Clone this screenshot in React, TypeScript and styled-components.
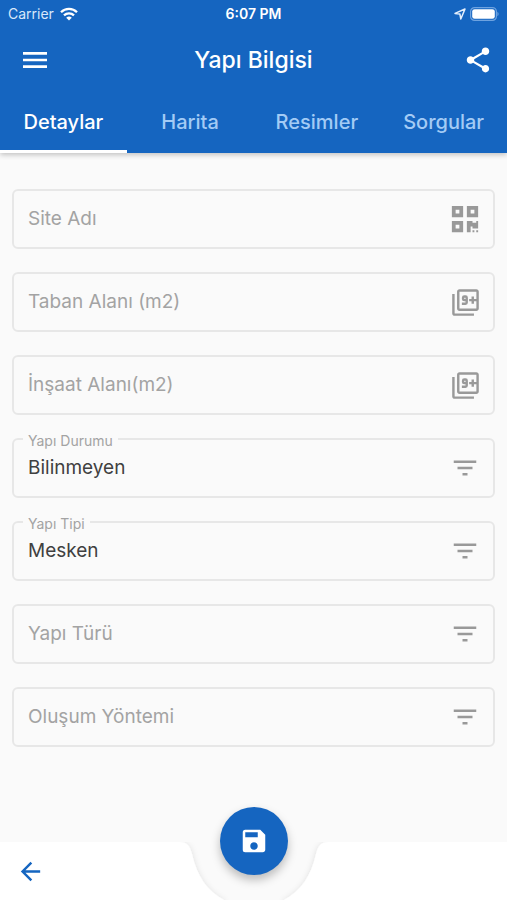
import { useId, useState } from "react";
import type { ReactNode } from "react";
import styled, { createGlobalStyle } from "styled-components";
import { FaQrcode } from "react-icons/fa";
import {
  MdArrowBack,
  MdFilterList,
  MdMenu,
  MdOutlineFilter9Plus,
  MdSave,
  MdShare,
} from "react-icons/md";

const colors = {
  primary: "#1565c0",
  page: "#fafafa",
  outline: "#e7e7e7",
  hint: "#a3a3a3",
  icon: "#999999",
  text: "#404040",
  inactiveTab: "#a3cbf5",
};

const GlobalStyle = createGlobalStyle`
  *, *::before, *::after { box-sizing: border-box; }
  body {
    margin: 0;
    background: ${colors.page};
    font-family: Inter, "Liberation Sans", sans-serif;
    color: ${colors.text};
  }
  button, input, select { font: inherit; }
`;

const Page = styled.div`
  display: flex;
  flex-direction: column;
  min-height: 100vh;
`;

const Header = styled.header`
  position: relative;
  background: ${colors.primary};
  color: #fff;
  box-shadow: 0 2px 5px rgba(0, 0, 0, 0.22);
`;

const StatusBar = styled.div`
  display: grid;
  grid-template-columns: 1fr auto 1fr;
  align-items: center;
  height: 28px;
  padding: 0 8px;
  font-size: 14px;
  line-height: 16px;
`;

const StatusGroup = styled.div<{ $end?: boolean }>`
  display: flex;
  align-items: center;
  gap: ${(p) => (p.$end ? 4 : 6)}px;
  justify-content: ${(p) => (p.$end ? "flex-end" : "flex-start")};
  color: #d9e8fa;
`;

const Clock = styled.span`
  font-weight: 600;
`;

const TitleBar = styled.div`
  display: grid;
  grid-template-columns: 1fr auto 1fr;
  align-items: center;
  height: 64px;
  padding: 0 14px;
`;

const Title = styled.h1`
  margin: 0;
  font-size: 23px;
  line-height: 28px;
  font-weight: 500;
`;

const IconButton = styled.button<{ $end?: boolean; $tone?: string }>`
  display: flex;
  justify-self: ${(p) => (p.$end ? "end" : "start")};
  padding: 0 ${(p) => (p.$end ? 0 : 5)}px;
  border: 0;
  background: none;
  color: ${(p) => p.$tone ?? "#fff"};
  cursor: pointer;
`;

const Tabs = styled.div`
  display: grid;
  grid-template-columns: repeat(4, 1fr);
`;

const Tab = styled.button<{ $active: boolean }>`
  height: 61px;
  padding: 2px 0 0;
  border: 0;
  border-bottom: 3px solid ${(p) => (p.$active ? "#fff" : "transparent")};
  background: none;
  color: ${(p) => (p.$active ? "#fff" : colors.inactiveTab)};
  font-size: 20px;
  line-height: 24px;
  font-weight: 500;
  cursor: pointer;
`;

const Form = styled.form`
  flex: 1;
  display: flex;
  flex-direction: column;
  gap: 23px;
  padding: 36px 12px 32px;
`;

const FieldBox = styled.div`
  position: relative;
  display: flex;
  align-items: center;
  height: 60px;
  padding-right: 13px;
  border: 2px solid ${colors.outline};
  border-radius: 6px;
  color: ${colors.icon};

  svg {
    flex: none;
    pointer-events: none;
  }
`;

const FieldLabel = styled.label<{ $floating: boolean }>`
  position: absolute;
  left: ${(p) => (p.$floating ? 9 : 14)}px;
  top: ${(p) => (p.$floating ? -7 : 16)}px;
  padding: 0 ${(p) => (p.$floating ? 5 : 0)}px;
  background: ${colors.page};
  color: ${colors.hint};
  font-size: ${(p) => (p.$floating ? 14 : 19)}px;
  line-height: ${(p) => (p.$floating ? 16 : 24)}px;
  pointer-events: none;
`;

const TextInput = styled.input`
  flex: 1;
  min-width: 0;
  align-self: stretch;
  padding: 0 14px;
  border: 0;
  outline: 0;
  background: none;
  color: ${colors.text};
  font-size: 19px;
`;

const Select = styled.select`
  flex: 1;
  min-width: 0;
  align-self: stretch;
  padding: 0 14px 2px;
  border: 0;
  outline: 0;
  appearance: none;
  background: none;
  color: ${colors.text};
  font-size: 19px;
`;

const BottomBar = styled.footer`
  position: sticky;
  bottom: 0;
  display: flex;
  height: 58px;
`;

const BarSide = styled.div`
  flex: 1;
  display: flex;
  align-items: center;
  padding-left: 11px;
  background: #fff;
`;

const Notch = styled.div`
  position: relative;
  width: 148px;

  > svg {
    display: block;
  }
`;

const SaveButton = styled.button`
  position: absolute;
  left: 40px;
  top: -35px;
  display: flex;
  align-items: center;
  justify-content: center;
  width: 68px;
  height: 68px;
  padding: 0;
  border: 0;
  border-radius: 50%;
  background: ${colors.primary};
  color: #fff;
  box-shadow: 0 5px 10px rgba(0, 0, 0, 0.25);
  cursor: pointer;
`;

function WifiIcon() {
  return (
    <svg width="18" height="14" viewBox="0 0 18 14" fill="none" stroke="#fff" strokeWidth="2.3" aria-hidden="true">
      <path d="M1 5.2a11.4 11.4 0 0 1 16 0" />
      <path d="M4 8.4a7.2 7.2 0 0 1 10 0" />
      <path d="M9 13.6 6.2 10.8a4 4 0 0 1 5.6 0z" fill="#fff" stroke="none" />
    </svg>
  );
}

function LocationIcon() {
  return (
    <svg width="12" height="12" viewBox="0 0 12 12" fill="none" stroke="#e4effc" strokeWidth="1.5" strokeLinejoin="round" aria-hidden="true">
      <path d="M1 5.4 11 1 6.8 11 5.9 6.1z" />
    </svg>
  );
}

function BatteryIcon() {
  return (
    <svg width="29" height="14" viewBox="0 0 29 14" aria-hidden="true">
      <rect x="0.6" y="0.6" width="25.8" height="12.8" rx="4" fill="none" stroke="#6ea3e0" strokeWidth="1.2" />
      <rect x="2.2" y="2.2" width="22.6" height="9.6" rx="2.4" fill="#fff" />
      <path d="M27.4 4.8c1.6.7 1.6 3.7 0 4.4z" fill="#6ea3e0" />
    </svg>
  );
}

interface FieldProps {
  label: string;
  icon: ReactNode;
  options?: string[];
  initial?: string;
}

function Field({ label, icon, options, initial = "" }: FieldProps) {
  const id = useId();
  const [value, setValue] = useState(initial);
  return (
    <FieldBox>
      {options ? (
        <Select id={id} value={value} onChange={(e) => setValue(e.target.value)}>
          {options.map((o) => (
            <option key={o} value={o}>
              {o}
            </option>
          ))}
        </Select>
      ) : (
        <TextInput id={id} value={value} onChange={(e) => setValue(e.target.value)} />
      )}
      <FieldLabel htmlFor={id} $floating={value !== ""}>
        {label}
      </FieldLabel>
      {icon}
    </FieldBox>
  );
}

const tabs = ["Detaylar", "Harita", "Resimler", "Sorgular"];

export default function App() {
  const [active, setActive] = useState(tabs[0]);
  return (
    <>
      <GlobalStyle />
      <Page>
        <Header>
          <StatusBar>
            <StatusGroup>
              Carrier
              <WifiIcon />
            </StatusGroup>
            <Clock>6:07 PM</Clock>
            <StatusGroup $end>
              <LocationIcon />
              <BatteryIcon />
            </StatusGroup>
          </StatusBar>
          <TitleBar>
            <IconButton type="button" aria-label="Menü">
              <MdMenu size={32} />
            </IconButton>
            <Title>Yapı Bilgisi</Title>
            <IconButton type="button" aria-label="Paylaş" $end>
              <MdShare size={30} />
            </IconButton>
          </TitleBar>
          <Tabs role="tablist">
            {tabs.map((t) => (
              <Tab
                key={t}
                type="button"
                role="tab"
                aria-selected={t === active}
                $active={t === active}
                onClick={() => setActive(t)}
              >
                {t}
              </Tab>
            ))}
          </Tabs>
        </Header>
        <Form>
          <Field label="Site Adı" icon={<FaQrcode size={30} />} />
          <Field label="Taban Alanı (m2)" icon={<MdOutlineFilter9Plus size={29} />} />
          <Field label="İnşaat Alanı(m2)" icon={<MdOutlineFilter9Plus size={29} />} />
          <Field label="Yapı Durumu" icon={<MdFilterList size={30} />} options={["Bilinmeyen"]} initial="Bilinmeyen" />
          <Field label="Yapı Tipi" icon={<MdFilterList size={30} />} options={["Mesken"]} initial="Mesken" />
          <Field label="Yapı Türü" icon={<MdFilterList size={30} />} options={[""]} />
          <Field label="Oluşum Yöntemi" icon={<MdFilterList size={30} />} options={[""]} />
        </Form>
        <BottomBar>
          <BarSide>
            <IconButton type="button" aria-label="Geri" $tone={colors.primary}>
              <MdArrowBack size={29} />
            </IconButton>
          </BarSide>
          <Notch>
            <svg width="148" height="58" viewBox="0 0 148 58" aria-hidden="true">
              <defs>
                <filter id="edge" x="-20%" y="-20%" width="140%" height="140%">
                  <feDropShadow dx="0" dy="1" stdDeviation="3" floodColor="#000" floodOpacity="0.12" />
                </filter>
              </defs>
              <g fill="#fff" filter="url(#edge)">
                <path d="M-20 0H0C7 0 10 4 12 12C17 34 27 49 44 58V70H-20z" />
                <path d="M168 0H148C141 0 138 4 136 12C131 34 121 49 104 58V70H168z" />
              </g>
            </svg>
            <SaveButton type="button" aria-label="Kaydet">
              <MdSave size={30} />
            </SaveButton>
          </Notch>
          <BarSide />
        </BottomBar>
      </Page>
    </>
  );
}
